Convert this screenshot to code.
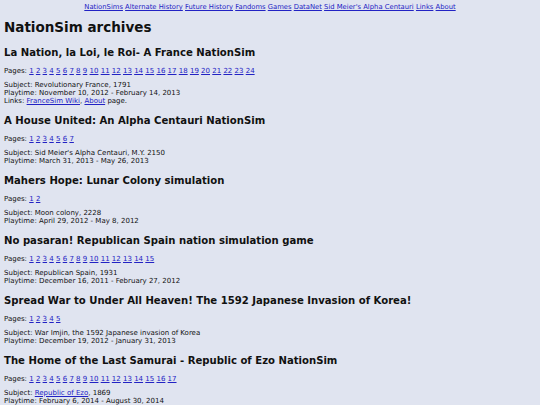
const navLinks = [
  "NationSims",
  "Alternate History",
  "Future History",
  "Fandoms",
  "Games",
  "DataNet",
  "Sid Meier's Alpha Centauri",
  "Links",
  "About",
];

type Part = { text: string; link?: boolean };

interface Sim {
  title: string;
  pages: number;
  subject: Part[];
  playtime: string;
  links?: Part[];
}

const sims: Sim[] = [
  {
    title: "La Nation, la Loi, le Roi- A France NationSim",
    pages: 24,
    subject: [{ text: "Revolutionary France, 1791" }],
    playtime: "November 10, 2012 - February 14, 2013",
    links: [
      { text: "FranceSim Wiki", link: true },
      { text: ", " },
      { text: "About", link: true },
      { text: " page." },
    ],
  },
  {
    title: "A House United: An Alpha Centauri NationSim",
    pages: 7,
    subject: [{ text: "Sid Meier's Alpha Centauri, M.Y. 2150" }],
    playtime: "March 31, 2013 - May 26, 2013",
  },
  {
    title: "Mahers Hope: Lunar Colony simulation",
    pages: 2,
    subject: [{ text: "Moon colony, 2228" }],
    playtime: "April 29, 2012 - May 8, 2012",
  },
  {
    title: "No pasaran! Republican Spain nation simulation game",
    pages: 15,
    subject: [{ text: "Republican Spain, 1931" }],
    playtime: "December 16, 2011 - February 27, 2012",
  },
  {
    title: "Spread War to Under All Heaven! The 1592 Japanese Invasion of Korea!",
    pages: 5,
    subject: [{ text: "War Imjin, the 1592 Japanese invasion of Korea" }],
    playtime: "December 19, 2012 - January 31, 2013",
  },
  {
    title: "The Home of the Last Samurai - Republic of Ezo NationSim",
    pages: 17,
    subject: [{ text: "Republic of Ezo", link: true }, { text: ", 1869" }],
    playtime: "February 6, 2014 - August 30, 2014",
  },
];

function A({ children }: { children: React.ReactNode }) {
  return (
    <a href="#" className="text-[#2222c4] underline underline-offset-1">
      {children}
    </a>
  );
}

function Parts({ parts }: { parts: Part[] }) {
  return (
    <>
      {parts.map((p, i) =>
        p.link ? <A key={i}>{p.text}</A> : <span key={i}>{p.text}</span>
      )}
    </>
  );
}

export default function App() {
  return (
    <div
      className="h-[405px] bg-[#e0e4f0] px-[4px] text-[#111] overflow-hidden"
      style={{ fontFamily: '"DejaVu Sans", Verdana, sans-serif' }}
    >
      <nav className="pt-[3px] text-center text-[6.8px] leading-[8px]">
        {navLinks.map((l, i) => (
          <span key={l}>
            {i > 0 && " "}
            <A>{l}</A>
          </span>
        ))}
      </nav>

      <h1 className="mt-[8px] text-[13.5px] leading-[16px] font-bold">
        NationSim archives
      </h1>

      {sims.map((sim, idx) => (
        <section
          key={sim.title}
          className={idx === 0 ? "mt-[11.5px]" : "mt-[10px]"}
        >
          <h2 className="text-[10.1px] leading-[12px] font-bold whitespace-nowrap">
            {sim.title}
          </h2>
          <p className="mt-[8px] text-[7px] leading-[8px]">
            Pages:{" "}
            {Array.from({ length: sim.pages }, (_, i) => (
              <span key={i}>
                {i > 0 && " "}
                <A>{i + 1}</A>
              </span>
            ))}
          </p>
          <p className="mt-[6px] text-[7px] leading-[8px]">
            Subject: <Parts parts={sim.subject} />
            <br />
            Playtime: {sim.playtime}
            {sim.links && (
              <>
                <br />
                Links: <Parts parts={sim.links} />
              </>
            )}
          </p>
        </section>
      ))}
    </div>
  );
}
